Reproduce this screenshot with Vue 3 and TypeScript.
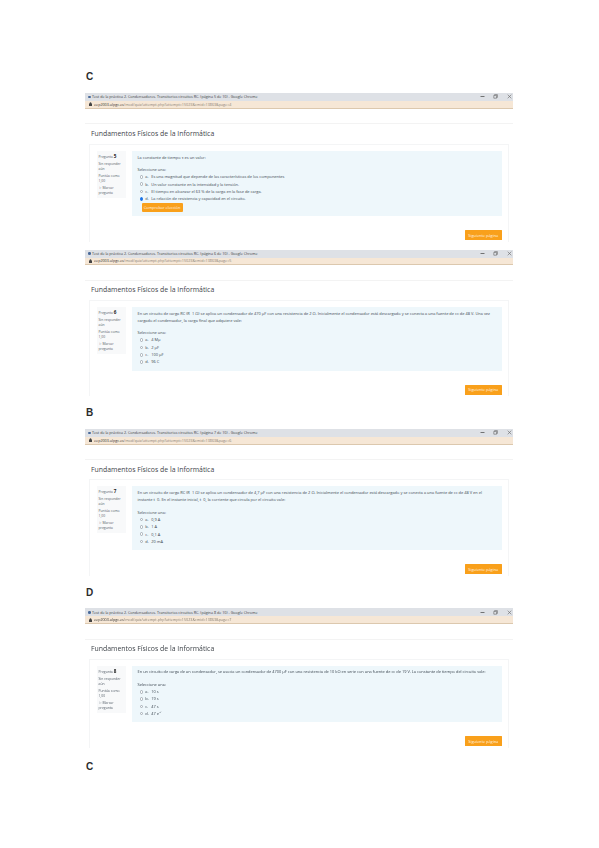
<template>
  <div class="doc">
    <template v-for="shot in shots" :key="shot.number">
      <p v-if="shot.letterBefore" class="letter">{{ shot.letterBefore }}</p>
      <section class="shot" :class="{ soft: shot.soft, first: shot.checkButton }">
        <div class="titlebar">
          <span class="favicon"></span>
          <span class="win-title">{{ shot.title }}</span>
          <span class="controls">
            <svg width="5" height="5" viewBox="0 0 5 5"><path d="M.5 2.5h4" stroke="#555" stroke-width=".8" /></svg>
            <svg width="5" height="5" viewBox="0 0 5 5"><path d="M.8 1.4h2.8v2.8H.8zM1.6 1.4V.6h2.8v2.8h-.8" fill="none" stroke="#666" stroke-width=".6" /></svg>
            <svg width="5" height="5" viewBox="0 0 5 5"><path d="M.7.7l3.6 3.6M4.3.7L.7 4.3" stroke="#666" stroke-width=".6" /></svg>
          </span>
        </div>
        <div class="urlbar">
          <svg class="lock" width="3" height="4" viewBox="0 0 3 4"><path d="M0 1.6h3V4H0zM.7 1.6V1a.8.8 0 0 1 1.6 0v.6" fill="#444" /></svg>
          <span class="host">{{ shot.host }}</span><span class="path">{{ shot.path }}</span>
        </div>
        <div class="rule"></div>
        <h1 class="course">Fundamentos Físicos de la Informática</h1>
        <div class="card">
          <div class="quiz-row">
            <aside class="info">
              <p>Pregunta <b>{{ shot.number }}</b></p>
              <p>Sin responder aún</p>
              <p>Puntúa como 1,00</p>
              <p>⚐ Marcar pregunta</p>
            </aside>
            <div class="content" :class="{ checked: shot.checkButton }">
              <p class="question">{{ shot.question }}</p>
              <p class="prompt">Seleccione una:</p>
              <div v-for="(opt, i) in shot.options" :key="opt" class="option">
                <span class="radio" :class="{ on: shot.selected === i }"></span>
                <span class="opt-letter">{{ 'abcd'[i] }}.</span>
                <span>{{ opt }}</span>
              </div>
              <button v-if="shot.checkButton" class="check">Comprobar elección</button>
            </div>
          </div>
          <div class="foot">
            <button class="next">Siguiente página</button>
          </div>
        </div>
      </section>
    </template>
    <p class="letter last">C</p>
  </div>
</template>

<script setup lang="ts">
interface Shot {
  number: number
  letterBefore: string
  title: string
  host: string
  path: string
  question: string
  options: string[]
  selected: number
  checkButton: boolean
  soft: boolean
}

const host = 'eep2003.ulpgc.es'
const path = '/mod/quiz/attempt.php?attempt=15023&cmid=13863&page='
const title = (page: number) =>
  `Test de la práctica 2. Condensadores. Transitorios circuitos RC. (página ${page} de 10) - Google Chrome`

const shots: Shot[] = [
  {
    number: 5,
    letterBefore: 'C',
    title: title(5),
    host,
    path: path + '4',
    question: 'La constante de tiempo τ es un valor:',
    options: [
      'Es una magnitud que depende de las características de los componentes',
      'Un valor constante en la intensidad y la tensión.',
      'El tiempo en alcanzar el 63 % de la carga en la fase de carga.',
      'La relación de resistencia y capacidad en el circuito.',
    ],
    selected: 3,
    checkButton: true,
    soft: false,
  },
  {
    number: 6,
    letterBefore: '',
    title: title(6),
    host,
    path: path + '5',
    question:
      'En un circuito de carga RC (R=1 Ω) se aplica un condensador de 470 µF con una resistencia de 2 Ω. Inicialmente el condensador está descargado y se conecta a una fuente de cc de 48 V. Una vez cargado el condensador, la carga final que adquiere vale:',
    options: ['4 Mµ', '2 µF', '100 µF', '96 C'],
    selected: -1,
    checkButton: false,
    soft: false,
  },
  {
    number: 7,
    letterBefore: 'B',
    title: title(7),
    host,
    path: path + '6',
    question:
      'En un circuito de carga RC (R=1 Ω) se aplica un condensador de 4,7 µF con una resistencia de 2 Ω. Inicialmente el condensador está descargado y se conecta a una fuente de cc de 48 V en el instante t=0. En el instante inicial, t=0, la corriente que circula por el circuito vale:',
    options: ['0,9 A', '1 A', '0,1 A', '20 mA'],
    selected: -1,
    checkButton: false,
    soft: false,
  },
  {
    number: 8,
    letterBefore: 'D',
    title: title(8),
    host,
    path: path + '7',
    question:
      'En un circuito de carga de un condensador, se asocia un condensador de 4700 µF con una resistencia de 10 kΩ en serie con una fuente de cc de 19 V. La constante de tiempo del circuito vale:',
    options: ['10 s', '19 s', '47 s', '47 e⁻⁷'],
    selected: -1,
    checkButton: false,
    soft: true,
  },
]
</script>

<style>
html,
body {
  margin: 0;
  background: #fff;
}
</style>

<style scoped>
.doc {
  box-sizing: border-box;
  width: 599px;
  height: 848px;
  padding: 60.2px 86px 0 85px;
  overflow: hidden;
  background: #fff;
  color: #3a3f45;
  font-family: "Open Sans", sans-serif;
  filter: blur(0.45px);
}
.letter {
  height: 12px;
  margin: 11.3px 0 9.5px 1px;
  color: #2b2b2b;
  font-family: "Liberation Sans", sans-serif;
  font-size: 10px;
  font-weight: 700;
  line-height: 12px;
}
.letter.last {
  margin-top: 13.6px;
}
.shot {
  margin-bottom: 8px;
}
.shot.soft {
  filter: blur(0.25px);
}
.titlebar {
  display: flex;
  align-items: center;
  height: 8px;
  padding: 0 3px;
  background: #dee1e6;
  font-size: 3.7px;
  color: #3c4043;
}
.favicon {
  width: 2.5px;
  height: 2.5px;
  margin-right: 1.5px;
  border-radius: 50%;
  background: #4a6a9a;
}
.win-title {
  white-space: nowrap;
}
.controls {
  display: flex;
  gap: 8.5px;
  margin-left: auto;
  margin-right: -1.5px;
}
.urlbar {
  display: flex;
  align-items: center;
  height: 6.9px;
  padding: 0 3px;
  border-bottom: 0.7px solid #dcc8ae;
  background: #f6e7d6;
  font-size: 3.7px;
  white-space: nowrap;
}
.lock {
  margin: 0 2px 0 1px;
}
.host {
  color: #333;
}
.path {
  color: #8b8378;
}
.rule {
  height: 1px;
  margin-top: 14.4px;
  background: #f3f3f3;
}
.course {
  box-sizing: border-box;
  height: 15.2px;
  margin: 0;
  padding: 2.5px 0 0 6px;
  color: #3f444a;
  font-size: 6.9px;
  font-weight: 400;
  line-height: 13px;
}
.first .course {
  height: 15.8px;
}
.card {
  margin: 4px 4px 0 3.5px;
  padding: 6px 6px 1.5px 7px;
  border: 0.5px solid #f4f5f6;
  border-bottom: 0;
}
.quiz-row {
  display: flex;
  align-items: flex-start;
  gap: 6px;
}
.info {
  box-sizing: border-box;
  flex: 0 0 29px;
  height: 47px;
  padding: 3px 2px;
  background: #f8f9fa;
  font-size: 3.4px;
  line-height: 5.2px;
  color: #56606a;
}
.info p {
  margin: 0 0 1.6px;
}
.info b {
  color: #222;
  font-size: 4.6px;
}
.content {
  flex: 1;
  min-width: 0;
  padding: 2.6px 6px 5px;
  background: #eef7fb;
  font-size: 3.95px;
  line-height: 7.3px;
  color: #3b4650;
}
.content.checked {
  padding-bottom: 3.6px;
}
.question,
.prompt {
  margin: 0;
}
.prompt {
  margin-top: 5px;
}
.option {
  display: flex;
  align-items: center;
  height: 7.3px;
  padding-left: 2px;
}
.radio {
  box-sizing: border-box;
  width: 3.6px;
  height: 3.6px;
  margin-right: 2.2px;
  border: 0.4px solid #a4adb4;
  border-radius: 50%;
  background: #fff;
}
.radio.on {
  border-color: #1a73e8;
  background: #1a73e8;
}
.opt-letter {
  width: 6px;
}
.check {
  display: block;
  box-sizing: border-box;
  width: 41px;
  height: 9.5px;
  margin: 0.5px 0 0 4px;
  padding: 0;
  border: 0;
  border-radius: 1px;
  background: #f9a01b;
  color: #fff3e0;
  font-family: inherit;
  font-size: 3.9px;
}
.foot {
  display: flex;
  justify-content: flex-end;
  padding-top: 14px;
}
.next {
  box-sizing: border-box;
  width: 37.5px;
  height: 10px;
  padding: 0;
  border: 0;
  border-radius: 0.5px;
  background: #f9a01b;
  color: #fff3e0;
  font-family: inherit;
  font-size: 3.9px;
}
</style>
